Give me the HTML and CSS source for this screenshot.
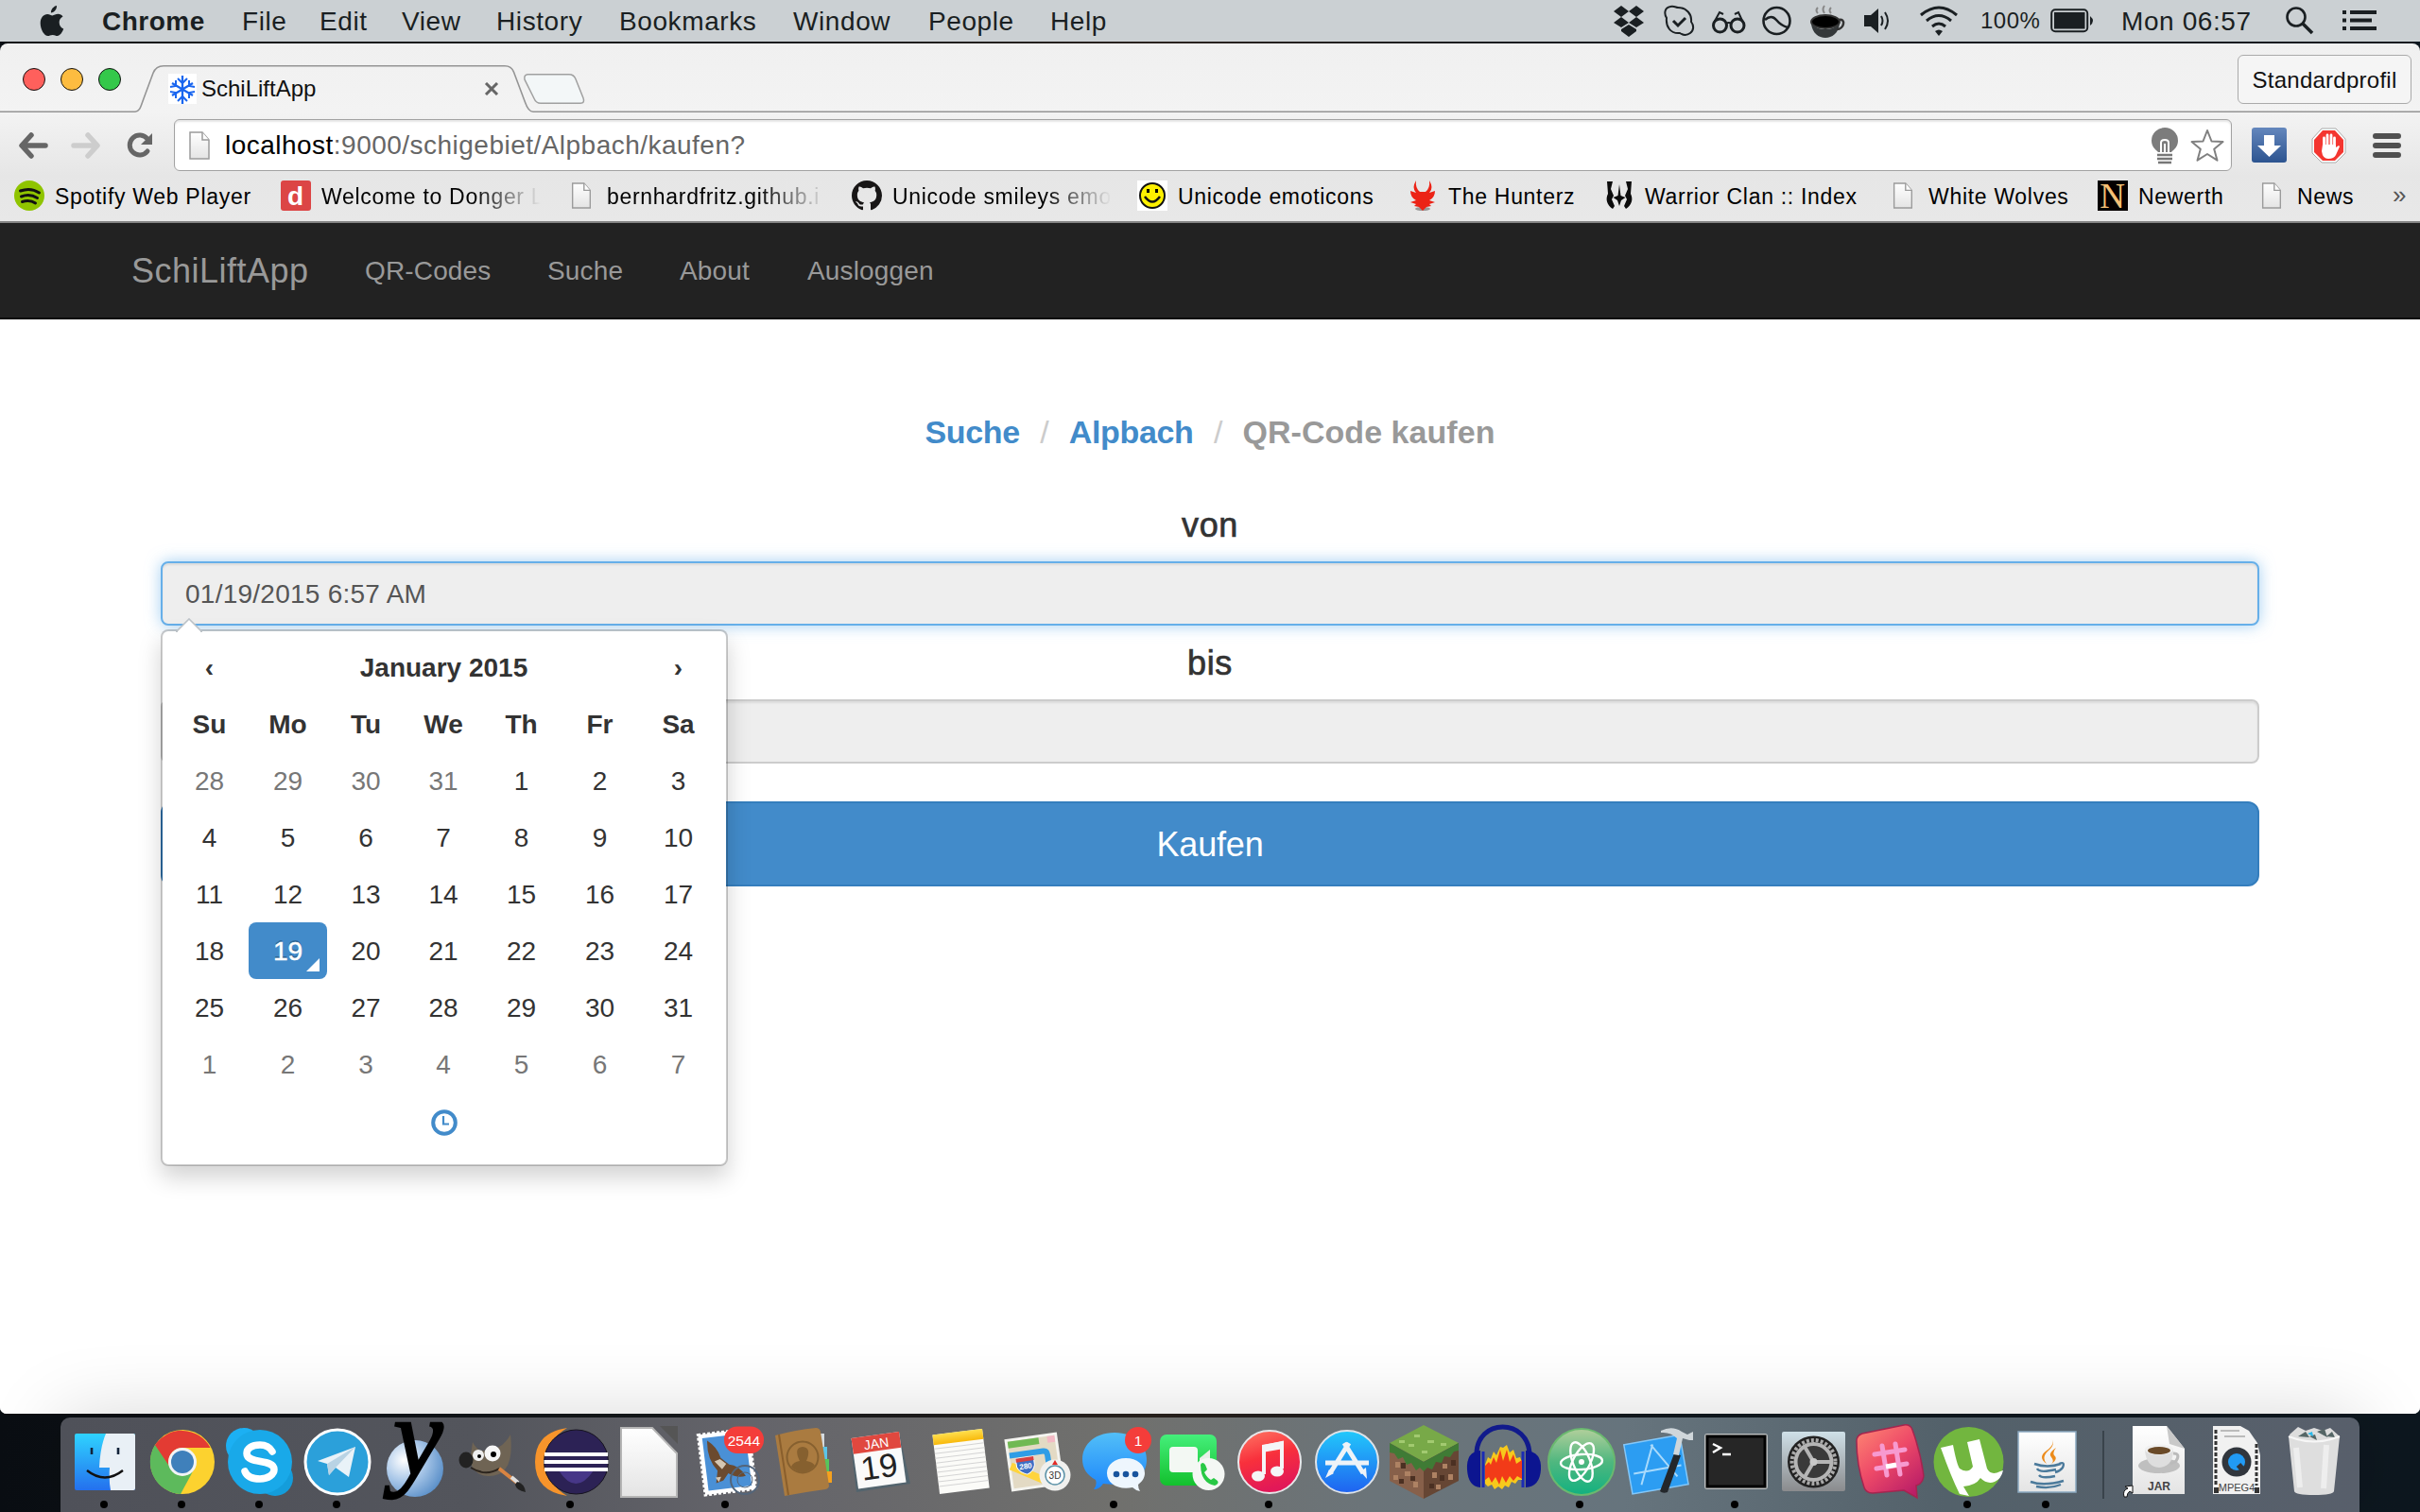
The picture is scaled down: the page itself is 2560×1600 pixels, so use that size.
FILE: index.html
```html
<!DOCTYPE html>
<html lang="de">
<head>
<meta charset="utf-8">
<title>SchiLiftApp</title>
<link rel="stylesheet" href="styles.css">
</head>
<body>
<svg class="defs" width="0" height="0" aria-hidden="true">
  <defs>
    <linearGradient id="paper" x1="0" y1="0" x2="0" y2="1"><stop offset="0" stop-color="#fff"/><stop offset="1" stop-color="#e4e4e4"/></linearGradient>
    <linearGradient id="finderBlue" x1="0" y1="0" x2="0" y2="1"><stop offset="0" stop-color="#2fd3ff"/><stop offset="1" stop-color="#2470ee"/></linearGradient>
    <linearGradient id="skyBlue" x1="0" y1="0" x2="0" y2="1"><stop offset="0" stop-color="#52bff8"/><stop offset="1" stop-color="#1d86fb"/></linearGradient>
    <linearGradient id="storeBlue" x1="0" y1="0" x2="0" y2="1"><stop offset="0" stop-color="#22c9fb"/><stop offset="1" stop-color="#1f62f0"/></linearGradient>
    <linearGradient id="itunes" x1="0" y1="0" x2=".3" y2="1"><stop offset="0" stop-color="#ff7a66"/><stop offset=".5" stop-color="#f8303c"/><stop offset="1" stop-color="#e21858"/></linearGradient>
    <linearGradient id="green" x1="0" y1="0" x2="0" y2="1"><stop offset="0" stop-color="#45ef7b"/><stop offset="1" stop-color="#13c02d"/></linearGradient>
    <linearGradient id="atom" x1="0" y1="0" x2="0" y2="1"><stop offset="0" stop-color="#b2cf9b"/><stop offset=".5" stop-color="#4fb77f"/><stop offset="1" stop-color="#12b180"/></linearGradient>
    <linearGradient id="pink" x1="0" y1="0" x2=".8" y2="1"><stop offset="0" stop-color="#ff8a73"/><stop offset=".5" stop-color="#ee4a68"/><stop offset="1" stop-color="#b91d67"/></linearGradient>
    <linearGradient id="steel" x1="0" y1="0" x2="0" y2="1"><stop offset="0" stop-color="#cfe0e8"/><stop offset="1" stop-color="#8a8b8d"/></linearGradient>
    <linearGradient id="yellow" x1="0" y1="0" x2="0" y2="1"><stop offset="0" stop-color="#ffdf4e"/><stop offset="1" stop-color="#f8b90b"/></linearGradient>
    <linearGradient id="dl" x1="0" y1="0" x2="0" y2="1"><stop offset="0" stop-color="#6487bd"/><stop offset="1" stop-color="#2c5490"/></linearGradient>
    <radialGradient id="ball" cx=".3" cy=".35" r=".75"><stop offset="0" stop-color="#fff"/><stop offset=".5" stop-color="#a9c7e8"/><stop offset="1" stop-color="#5b90c9"/></radialGradient>
    <symbol id="doc" viewBox="0 0 22 30"><path d="M1 1h13l7 8v20H1z" fill="url(#paper)" stroke="#9b9b9b" stroke-width="1.5"/><path d="M14 1v8h7" fill="#fff" stroke="#9b9b9b" stroke-width="1.5"/></symbol>
  </defs>
</svg>

<header class="menubar">
  <svg width="26" height="34" viewBox="0 0 26 34"><path d="M18 1c.3 3.600-2.600 7.500-6 7.500C11.500 5 15 1.400 18 1zM24.500 12.500c-2.500 1.600-4 3.600-3.800 6.500.1 3.200 1.900 5.400 4.500 6.600C23.900 29.400 21.300 33 18.700 33c-1.900 0-2.600-1.100-5-1.100-2.500 0-3.400 1.100-5 1.100C5 33 .7 26.500.7 19.500.7 13.800 4.200 10 8.200 10c2.200 0 3.900 1.400 5.300 1.400S17.200 9.800 19.500 9.800c2 0 3.800.9 5 2.700z" fill="#1a1f22"/></svg>
  <b>Chrome</b><span>File</span><span>Edit</span><span>View</span><span>History</span><span>Bookmarks</span><span>Window</span><span>People</span><span>Help</span>
  <svg width="34" height="34" viewBox="0 0 34 34" fill="#1a1f22"><path d="M9 1l8 6-8 6-8-6zM25 1l8 6-8 6-8-6zM9 13l8 6-8 5-8-5zM25 13l8 6-8 5-8-5zM17 21l8 5v2l-8 6-8-6v-2z"/></svg>
  <svg width="34" height="34" viewBox="0 0 34 34" fill="none" stroke="#1a1f22" stroke-width="2"><path d="M4 14C1 9 2 3 8 2c4-1 6 1 8 1 9 0 15 7 14 15 3 4 3 9-1 12-4 3-8 2-11 0C8 31 3 23 4 14z"/><path d="M11 17l5 5 8-8" stroke-width="3"/></svg>
  <svg width="38" height="34" viewBox="0 0 38 34" fill="none" stroke="#1a1f22" stroke-width="3"><circle cx="9.500" cy="22" r="7"/><circle cx="28" cy="22" r="7"/><path d="M16 20q3-2 5 0M3 19L9 8l4 2M34 19L29 8l-4 2" stroke-width="2"/></svg>
  <svg width="32" height="34" viewBox="0 0 32 34" fill="none" stroke="#1a1f22" stroke-width="2.600"><circle cx="15.500" cy="17" r="14"/><path d="M3 16q7-6 12 0t12 8"/></svg>
  <svg width="38" height="38" viewBox="0 0 38 38"><ellipse cx="17" cy="20" rx="15" ry="7" fill="#000" stroke="#333" stroke-width="2"/><path d="M2 22c2 20 28 20 30 0-7 8-23 8-30 0z" fill="#34383a"/><path d="M31 18c8-2 6 10-2 10" stroke="#333" stroke-width="2.500" fill="none"/><path d="M9 11q-3-3 0-6M16 11q-3-4 0-8M23 11q-3-3 0-6" stroke="#888" stroke-width="2" fill="none"/></svg>
  <svg width="28" height="34" viewBox="0 0 28 34"><path d="M0 11h7l8-7v26l-8-7H0z" fill="#1a1f22"/><path d="M18 12q3 5 0 10M22 8q6 9 0 18" fill="none" stroke="#1a1f22" stroke-width="2"/></svg>
  <svg width="42" height="34" viewBox="0 0 42 34" fill="none" stroke="#1a1f22" stroke-width="3"><path d="M2 11q19-16 38 0M8 17q13-11 26 0M14 23q7-6 14 0"/><path d="M17 28q4-3 8 0l-4 5z" fill="#1a1f22" stroke="none"/></svg>
  <span class="percent">100%</span>
  <svg width="46" height="26" viewBox="0 0 46 26"><rect x="1.200" y="1.200" width="38" height="23" rx="4" fill="none" stroke="#1a1f22" stroke-width="2"/><rect x="4" y="4" width="32.500" height="17.500" fill="#1a1f22"/><path d="M42 8q6 5 0 10z" fill="#1a1f22"/></svg>
  <span>Mon 06:57</span>
  <svg width="30" height="30" viewBox="0 0 30 30" fill="none" stroke="#1a1f22" stroke-width="2.600"><circle cx="11" cy="11" r="9.500"/><path d="M18 18l10 10" stroke-width="3.500"/></svg>
  <svg width="38" height="22" viewBox="0 0 38 22" fill="#1a1f22"><path d="M0 0h4v4H0zM8 0h28v4H8zM0 8.500h4v4H0zM8 8.500h23v4H8zM0 17h4v4H0zM8 17h28v4H8z"/></svg>
</header>

<main class="window">
  <div class="tabstrip">
    <svg class="tabshape" width="2560" height="73" viewBox="0 46 2560 73"><path d="M0 118.200H143c5 0 6-6 9-14l10-27q3-7.500 11-7.500H534q7 0 9.500 6.500l12 32q3.500 10 8.500 10H2560" fill="none" stroke="#949494" stroke-width="1.600"/><path d="M558 78.700H602q5 0 7 5l8 20q2 5.500-3 5.500H572q-5 0-7-5l-10-20q-1-5 3-5.500z" fill="#f3f7f8" stroke="#a0a0a0" stroke-width="1.500"/></svg>
    <div class="lights"><i class="red"></i><i class="amber"></i><i class="lime"></i></div>
    <div class="tab">
      <svg width="30" height="32" viewBox="0 0 30 32"><rect width="30" height="32" fill="#fff"/><path d="M15 2v30M4 10l22 13M26 10L4 23" fill="none" stroke="#1a66ef" stroke-width="2.300"/><path d="M10 5l5 5 5-5M10 29l5-5 5 5M2 14l6-1V7M28 14l-6-1V7M2 19l6 1v6M28 19l-6 1v6" fill="none" stroke="#1a66ef" stroke-width="2"/></svg>
      <span>SchiLiftApp</span>
      <svg class="close" width="16" height="14" viewBox="0 0 16 14"><path d="M2 1l12 12M14 1L2 13" stroke="#666" stroke-width="3"/></svg>
    </div>
    <div class="profile">Standardprofil</div>
  </div>

  <div class="toolbar">
    <svg width="32" height="28" viewBox="0 0 32 28"><path d="M14 3L4 14l10 11M5 14h24" fill="none" stroke="#666" stroke-width="5.500" stroke-linecap="round" stroke-linejoin="round"/></svg>
    <svg width="32" height="28" viewBox="0 0 32 28"><path d="M18 3l10 11-10 11M27 14H3" fill="none" stroke="#cdcdcd" stroke-width="5.500" stroke-linecap="round" stroke-linejoin="round"/></svg>
    <svg width="30" height="30" viewBox="0 0 30 30"><path d="M22 21a10.500 10.500 0 1 1 0-13" fill="none" stroke="#666" stroke-width="5" stroke-linecap="round"/><path d="M27 2v12H15z" fill="#666"/></svg>
    <div class="omnibox">
      <svg width="22" height="30"><use href="#doc"/></svg>
      <span class="url">localhost<em>:9000/schigebiet/Alpbach/kaufen?</em></span>
      <svg width="30" height="40" viewBox="0 0 30 40"><path d="M15 1a14 14 0 0 0-14 14c0 6 4 9 7 12h14c3-3 7-6 7-12A14 14 0 0 0 15 1z" fill="#7c7c7c"/><path d="M11 27V17q0-3 4-3t4 3v10M15 18v9" fill="none" stroke="#fff" stroke-width="2"/><path d="M7 30h16M7 34h16M8 38h14" stroke="#777" stroke-width="2.600"/></svg>
      <svg width="36" height="36" viewBox="0 0 36 36"><path d="M18 2l4.500 11.500 12 .6-9.300 7.600 3.300 12L18 27 7.500 33.700l3.300-12L1.500 14.100l12-.6z" fill="#fff" stroke="#808080" stroke-width="2" stroke-linejoin="round"/></svg>
    </div>
    <svg width="37" height="38" viewBox="0 0 37 38"><rect width="37" height="37" rx="3" fill="url(#dl)"/><path d="M13 8h11v11h7L18.500 31 6 19h7z" fill="#fff"/></svg>
    <svg width="37" height="38" viewBox="0 0 37 38"><path d="M11 1h15l10 11v15L26 37H11L1 27V12z" fill="#fff" stroke="#aaa"/><path d="M12 3h13l9 10v13l-9 9H12l-9-9V13z" fill="#f43630"/><path d="M13.500 20V11M17 19V8M21 19V8M24.500 20v-9" stroke="#fff" stroke-width="2.800" stroke-linecap="round"/><path d="M12 18h14v3l3-2 1 1-4 9q-2 4-8 4t-7-8z" fill="#fff"/></svg>
    <svg width="32" height="28" viewBox="0 0 32 28"><path d="M3 4h24M3 14h24M3 24h24" stroke="#505050" stroke-width="6" stroke-linecap="round"/></svg>
  </div>

  <nav class="bookmarks">
    <a><svg width="32" height="32" viewBox="0 0 32 32"><circle cx="16" cy="16" r="16" fill="#8fc400"/><path d="M6.500 11q11-4 20 2M7.500 17q9-3.500 17 1.500M8.500 22.500q8-2.500 14 1.500" fill="none" stroke="#111" stroke-width="3" stroke-linecap="round"/></svg><span>Spotify Web Player</span></a>
    <a><svg width="32" height="32" viewBox="0 0 32 32"><rect width="32" height="32" rx="3" fill="#dc4545"/><text x="16" y="26" text-anchor="middle" class="donger">d</text></svg><span class="fade">Welcome to Donger L</span></a>
    <a><svg width="32" height="28"><use href="#doc" x="5" width="22" height="28"/></svg><span class="fade">bernhardfritz.github.i</span></a>
    <a><svg width="32" height="32" viewBox="0 0 16 16"><path fill="#181616" d="M8 0C3.580 0 0 3.580 0 8c0 3.540 2.290 6.530 5.470 7.590.4.070.55-.17.55-.38 0-.19-.01-.82-.01-1.490-2.010.37-2.530-.49-2.690-.94-.09-.23-.48-.94-.82-1.130-.28-.15-.68-.52-.01-.53.63-.01 1.080.58 1.230.82.72 1.210 1.870.87 2.330.66.070-.52.28-.87.510-1.070-1.780-.2-3.640-.89-3.640-3.950 0-.87.31-1.590.82-2.150-.08-.2-.36-1.020.08-2.120 0 0 .67-.21 2.200.82a7.600 7.600 0 0 1 4 0c1.530-1.040 2.200-.82 2.200-.82.44 1.100.16 1.920.08 2.120.51.56.82 1.270.82 2.150 0 3.070-1.870 3.750-3.650 3.950.29.25.54.73.54 1.480 0 1.070-.01 1.930-.01 2.200 0 .21.15.46.55.38A8 8 0 0 0 16 8c0-4.420-3.580-8-8-8z"/></svg><span class="fade">Unicode smileys emo</span></a>
    <a><svg width="32" height="32" viewBox="0 0 32 32"><rect width="32" height="32" fill="#fff"/><circle cx="16" cy="16" r="13" fill="#fdf000" stroke="#111" stroke-width="2"/><path d="M10 9h3v4h-3zM19 9h3v4h-3z"/><path d="M8 17q8 11 16 0" fill="none" stroke="#111" stroke-width="2.500"/></svg><span>Unicode emoticons</span></a>
    <a><svg width="32" height="32" viewBox="0 0 32 32"><ellipse cx="16" cy="30" rx="8" ry="2" fill="#999"/><path d="M9 0Q4 8 9 13L3 11q0 7 6 10l-6 2 6 2-2 2 5 1 4 4 4-4 5-1-2-2 6-2-6-2q6-3 6-10l-6 2q5-5 0-13 1 8-4 12h-6Q8 8 9 0z" fill="#ec2316"/></svg><span>The Hunterz</span></a>
    <a><svg width="32" height="32" viewBox="0 0 32 32"><path d="M3 1h6l-2 8 3 7-2 4 3 7-2 3C3 26 1 20 4 14zM29 1h-6l2 8-3 7 2 4-3 7 2 3c6-4 8-10 5-16z" fill="#0c0c0c"/><path d="M16 4l1.500 12 5 2-4.500 3-2 6-2-6-4.500-3 5-2z" fill="#0c0c0c"/></svg><span>Warrior Clan :: Index</span></a>
    <a><svg width="32" height="28"><use href="#doc" x="5" width="22" height="28"/></svg><span>White Wolves</span></a>
    <a><svg width="32" height="32" viewBox="0 0 32 32"><rect width="32" height="32" fill="#050000"/><text x="16" y="29" text-anchor="middle" class="newerth">N</text></svg><span>Newerth</span></a>
    <a><svg width="32" height="28"><use href="#doc" x="5" width="22" height="28"/></svg><span>News</span></a>
    <span class="more">»</span>
  </nav>

  <nav class="navbar">
    <span class="brand">SchiLiftApp</span><span>QR-Codes</span><span>Suche</span><span>About</span><span>Ausloggen</span>
  </nav>

  <section class="page">
    <div class="breadcrumb"><b>Suche</b><i>/</i><b>Alpbach</b><i>/</i><b class="current">QR-Code kaufen</b></div>
    <div class="label von">von</div>
    <div class="field focus">01/19/2015 6:57 AM
      <div class="picker">
        <svg class="notch" width="28" height="15" viewBox="0 0 28 15"><path d="M0 15L14 1l14 14z" fill="#fff" stroke="#bdc3c8" stroke-width="1.600"/><path d="M2 14h24v2H2z" fill="#fff"/></svg>
        <div class="days">
          <b>‹</b><b class="month">January 2015</b><b>›</b>
          <b>Su</b><b>Mo</b><b>Tu</b><b>We</b><b>Th</b><b>Fr</b><b>Sa</b>
          <span class="old">28</span><span class="old">29</span><span class="old">30</span><span class="old">31</span><span>1</span><span>2</span><span>3</span>
          <span>4</span><span>5</span><span>6</span><span>7</span><span>8</span><span>9</span><span>10</span>
          <span>11</span><span>12</span><span>13</span><span>14</span><span>15</span><span>16</span><span>17</span>
          <span>18</span><span class="active">19</span><span>20</span><span>21</span><span>22</span><span>23</span><span>24</span>
          <span>25</span><span>26</span><span>27</span><span>28</span><span>29</span><span>30</span><span>31</span>
          <span class="old">1</span><span class="old">2</span><span class="old">3</span><span class="old">4</span><span class="old">5</span><span class="old">6</span><span class="old">7</span>
        </div>
        <div class="clock"><svg width="28" height="28" viewBox="0 0 28 28" fill="none" stroke="#428bca"><circle cx="14" cy="14" r="11.800" stroke-width="4"/><path d="M13 7v8.500h6" stroke-width="2.200"/></svg></div>
      </div>
    </div>
    <div class="label bis">bis</div>
    <div class="field"></div>
    <div class="buy">Kaufen</div>
  </section>
</main>

<footer class="dock">
  <div class="app run"><svg viewBox="0 0 82 100"><rect x="9" y="17" width="64" height="60" rx="2" fill="url(#finderBlue)"/><path d="M42 17h29q2 0 2 2v56q0 2-2 2H47q-2-11-1-24H35q1-22 7-36z" fill="#e9f0f6"/><path d="M27 32v7M55 32v7" stroke="#12233a" stroke-width="2.600"/><path d="M22 56q19 15 38 0" fill="none" stroke="#111" stroke-width="2.400"/></svg></div>
  <div class="app run"><svg viewBox="0 0 82 100"><circle cx="41" cy="47" r="34" fill="#fcd22f"/><path d="M11.500 30A34 34 0 0 1 70.500 32H41a15 15 0 0 0-14 20z" fill="#e33b33"/><path d="M12 29A34 34 0 0 0 39 81l13-24a15 15 0 0 1-24-4z" fill="#5dba5c"/><circle cx="41" cy="47" r="15" fill="#f1f4f6"/><circle cx="41" cy="47" r="12" fill="#3f80bb"/></svg></div>
  <div class="app run"><svg viewBox="0 0 82 100"><circle cx="24" cy="30" r="19" fill="#1cb0f3"/><circle cx="57" cy="64" r="19" fill="#149ddb"/><circle cx="41" cy="47" r="34" fill="#19a9e9"/><path d="M54 36Q50 29 41 29c-9 0-14 4-14 9 0 12 29 5 29 17 0 5-6 10-15 10-8 0-14-3-16-8" fill="none" stroke="#fff" stroke-width="7.500" stroke-linecap="round"/></svg></div>
  <div class="app run"><svg viewBox="0 0 82 100"><circle cx="41" cy="47" r="34" fill="#2ba0da" stroke="#fff" stroke-width="3"/><path d="M20 46l40-15-7 32-14-10-7 8-2-12z" fill="#e9f2f8"/><path d="M30 49l30-18-21 22-7 8z" fill="#b9d3e4"/></svg></div>
  <div class="app"><svg viewBox="0 0 82 100"><circle cx="40" cy="54" r="30" fill="url(#ball)"/><text x="17" y="61" class="ygl">y</text></svg></div>
  <div class="app"><svg viewBox="0 0 82 100"><path d="M19 26q3 6 8 9 22 2 32-17 5 45-24 44Q20 61 16 46z" fill="#6f6454"/><ellipse cx="12" cy="45" rx="7.500" ry="8.500" fill="#222"/><circle cx="25" cy="40" r="6" fill="#eee"/><circle cx="40" cy="38" r="8.500" fill="#f6f6f6"/><circle cx="26" cy="41" r="2" /><circle cx="41" cy="39" r="3"/><path d="M17 53q16 10 30 1" fill="none" stroke="#2b241d" stroke-width="2"/><path d="M47 54l19 15" stroke="#d98442" stroke-width="4"/><path d="M60 63l7 6" stroke="#ddd" stroke-width="4"/><path d="M66 68q8 2 9 11-10-2-11-8z" fill="#222"/></svg></div>
  <div class="app run"><svg viewBox="0 0 82 100"><path d="M37 11Q3 16 3 47t34 36Q15 70 15 47t22-36z" fill="#f7942b"/><circle cx="46.500" cy="47" r="34" fill="#2c2255" stroke="#16131f"/><path d="M28 56q18 28 37 0z" fill="#473788"/><path d="M13 39h67M12.500 47h68M13 55h67" stroke="#fff" stroke-width="4"/></svg></div>
  <div class="app"><svg viewBox="0 0 82 100"><path d="M12 11h33l26 27v46H12z" fill="url(#paper)" stroke="#b5b5b5" stroke-width="2"/><path d="M53 9h19v19z" fill="#555"/></svg></div>
  <div class="app run"><svg viewBox="0 0 82 100"><g transform="rotate(-7 42 47)"><rect x="15" y="15" width="54" height="64" fill="#fff" stroke="#fff" stroke-width="3" stroke-dasharray="3 2"/><rect x="19" y="19" width="46" height="56" fill="#4a90d6"/><path d="M24 22q10 8 12 20l8 8q10 2 16 14-9 2-18-5l-6 7-8 2 3-13q-10-14-7-33z" fill="#6b4a2f"/><path d="M29 45l6-2 6 6-5 5zM28 62l6 0-3 5z" fill="#d5c6b2"/></g><circle cx="61" cy="66" r="15" fill="none" stroke="#53657a" stroke-width="2"/><circle cx="61" cy="66" r="8" fill="none" stroke="#53657a"/><rect x="39" y="9.500" width="42" height="28.500" rx="14" fill="#f43d3a"/><text x="60" y="29.500" text-anchor="middle" class="badge">2544</text></svg></div>
  <div class="app"><svg viewBox="0 0 82 100"><path d="M58 17h5v15h-5z" fill="#d5dbe0"/><path d="M60 31h6v13h-6z" fill="#5bc5e8"/><path d="M62 44h6v13h-6z" fill="#57c65c"/><path d="M63 57h8v12h-8z" fill="#f5a11e"/><path d="M11 19q22-6 43-8 4 0 5 4l9 57q0 3-4 4-22 3-43 7z" fill="#aa7b40"/><path d="M15 18l10 64" stroke="#8a5f2c" stroke-width="2"/><circle cx="40" cy="42" r="16.500" fill="none" stroke="#86602f" stroke-width="2"/><path d="M28 52q2-5 9-6-7-14 3-15 10 1 4 15 7 1 9 5-12 14-25 1z" fill="#86602f"/></svg></div>
  <div class="app"><svg viewBox="0 0 82 100"><path d="M8 23l52-8 12 55-57 9z" fill="#53646e"/><g transform="rotate(-8 40 45)"><rect x="13" y="18" width="51" height="54" fill="#fafafa"/><path d="M13 18h51v17H13z" fill="#e0483f"/><text x="38.500" y="32" text-anchor="middle" class="cal-m">JAN</text><text x="38" y="64" text-anchor="middle" class="cal-d">19</text></g></svg></div>
  <div class="app"><svg viewBox="0 0 82 100"><g transform="rotate(-7 42 46)"><rect x="16" y="15" width="53" height="63" fill="#fbfbf8"/><path d="M16 30h53M16 35h53M16 40h53M16 45h53M16 50h53M16 55h53M16 60h53M16 65h53M16 70h53" stroke="#d4d4d4"/><rect x="16" y="15" width="53" height="11" fill="url(#yellow)"/></g></svg></div>
  <div class="app"><svg viewBox="0 0 82 100"><g transform="rotate(-8 38 47)"><rect x="10" y="19" width="56" height="56" fill="#f4f4f0"/><rect x="13" y="22" width="50" height="50" fill="#e3dac4"/><path d="M13 22h33v7H13z" fill="#70b953"/><path d="M55 22h8v7h-8z" fill="#f3b9c4"/><path d="M13 37h36q4 0 4 5v30" fill="none" stroke="#2f9de6" stroke-width="6"/><path d="M13 48l40 24" stroke="#ffd43c" stroke-width="8"/><path d="M19 41h19v9q-2 7-9 9-8-3-10-9z" fill="#3e6fc6" stroke="#fff"/><path d="M19 41h19v4H19z" fill="#d64141"/><text x="28.500" y="53" text-anchor="middle" class="route">280</text></g><circle cx="60" cy="61" r="16.500" fill="#f0f0ee"/><circle cx="60" cy="61" r="10" fill="#fff" stroke="#5d93a8" stroke-width="1.500"/><text x="60" y="65" text-anchor="middle" class="three">3D</text><path d="M60 45l3 5h-6z" fill="#e32a26"/></svg></div>
  <div class="app run"><svg viewBox="0 0 82 100"><path d="M41 16c20 0 34 12 34 29S59 71 41 71l-12-1q-4 6-10 6 4-5 2-10C12 61 7 54 7 44 7 28 21 16 41 16z" fill="url(#skyBlue)"/><path d="M53 43c12 0 20 7 20 16 0 5-3 9-7 12q0 4 2 7-5-1-8-4c-15 3-27-4-27-15 0-9 8-16 20-16z" fill="#eef6fd"/><circle cx="43" cy="60" r="3.300" fill="#18549d"/><circle cx="53" cy="60" r="3.300" fill="#18549d"/><circle cx="63" cy="60" r="3.300" fill="#18549d"/><circle cx="66" cy="24" r="14" fill="#f43d3a"/><text x="66" y="29.500" text-anchor="middle" class="badge">1</text></svg></div>
  <div class="app"><svg viewBox="0 0 82 100"><rect x="7" y="18" width="60" height="54" rx="7" fill="url(#green)"/><rect x="17" y="31" width="30" height="27" rx="4" fill="#f3f8f3"/><path d="M49 43l11-9v22l-11-8z" fill="#e7efe7"/><circle cx="58.500" cy="60" r="17" fill="#f4f7f4"/><path d="M50 50q2-4 5 0l2 5-3 3q3 6 7 8l3-2 4 3q2 3-3 5-15-3-15-22z" fill="#28c945"/></svg></div>
  <div class="app run"><svg viewBox="0 0 82 100"><circle cx="41" cy="47" r="33" fill="url(#itunes)" stroke="#e7e7ea" stroke-width="2"/><path d="M35 60V31l19-4v27" fill="none" stroke="#f5f5f7" stroke-width="4"/><path d="M33 29l23-4v8l-23 4z" fill="#f5f5f7"/><ellipse cx="29" cy="62" rx="7" ry="5.500" fill="#f5f5f7"/><ellipse cx="49" cy="57" rx="7" ry="5.500" fill="#f5f5f7"/></svg></div>
  <div class="app"><svg viewBox="0 0 82 100"><circle cx="41" cy="47" r="33" fill="url(#storeBlue)" stroke="#dfe3e8" stroke-width="2"/><path d="M43 27L23 59M38 27l20 32M18 48h46" stroke="#eef3f8" stroke-width="5"/><path d="M22 55l-4 9 9-5zM55 57l7 8-1-12z" fill="#eef3f8"/></svg></div>
  <div class="app"><svg viewBox="0 0 82 100"><path d="M40 8l37 19-37 20L4 27z" fill="#78a948"/><path d="M4 27l36 20v39L4 67z" fill="#87604a"/><path d="M77 27L40 47v39l37-19z" fill="#664634"/><path d="M4 27l36 20v10l-4-4-4 3-5-8-5 2-4-8-5 2-4-6-5-1zM77 27L40 47v10l4-4 5 2 4-8 6 1 3-7 6 1 4-6 5-1z" fill="#3f7b35"/><path d="M10 47h5v6h-5zM20 57h6v5h-6zM8 61h5v5H8zM29 68h5v6h-5zM49 58h5v6h-5zM60 49h5v5h-5zM66 60h5v6h-5zM53 71h5v5h-5z" fill="#ae8263"/><path d="M16 48h5v6h-5zM26 62h5v5h-5zM14 65h5v5h-5zM57 61h5v6h-5zM46 70h5v5h-5zM69 45h5v6h-5z" fill="#4b3022"/><path d="M30 18h6v3h-6zM44 24h7v3h-7zM24 28h6v3h-6zM38 35h6v3h-6zM58 27h6v3h-6zM14 24h6v3h-6z" fill="#a2ca70"/></svg></div>
  <div class="app"><svg viewBox="0 0 82 100"><path d="M13 40C12 0 69 0 69 40" fill="none" stroke="#111a8c" stroke-width="5"/><path d="M17 35Q2 36 3 55q1 18 14 19zM65 35q17 1 16 20-1 18-16 19z" fill="#0c1590"/><path d="M20 36v38M62 36v38" stroke="#1b2bb5" stroke-width="3"/><path d="M22 50l3-8 3 2 3-8 3 4 4-9 3 1 4-3 3 8 4-3 3 9 4-1 2 5v19l-4 0-3 4-4-2-3 6-4-2-3 4-4-3-4 3-3-5-4 2-3-3z" fill="#f7c91c"/><path d="M22 51l4-4 2 3 3-8 3 6 4-14 3 12 4-12 3 13 4-8 3 10 6-4v20l-5-3-4 5-4-5-4 7-4-7-3 9-4-8-4 6-3-6-4 3z" fill="#f23b18"/></svg></div>
  <div class="app run"><svg viewBox="0 0 82 100"><circle cx="42" cy="47" r="35" fill="url(#atom)" stroke="#6ab96f" stroke-width="2"/><g fill="none" stroke="#fff" stroke-width="2.400"><ellipse cx="42" cy="47" rx="9" ry="22" transform="rotate(-22 42 47)"/><ellipse cx="42" cy="47" rx="9" ry="22" transform="rotate(28 42 47)"/><ellipse cx="42" cy="47" rx="22" ry="8" transform="rotate(-4 42 47)"/></g><circle cx="42" cy="47" r="3" fill="#fff"/></svg></div>
  <div class="app"><svg viewBox="0 0 82 100"><g transform="rotate(-10 40 50)"><rect x="9" y="23" width="60" height="53" fill="#2c9df2" stroke="#84c7f8" stroke-width="1.500"/><path d="M39 28L20 68M37 28l22 38M14 55h51" stroke="#a8dafc" stroke-width="2" fill="none"/></g><path d="M58 38l7 2-14 39q-5 2-8-1z" fill="#23272b"/><path d="M44 14q12-6 22 1l6 3 6-3v9l-4 0-7-2-4 18-6-1 4-17q-7-7-17-6z" fill="#cfd6da"/></svg></div>
  <div class="app run"><svg viewBox="0 0 82 100"><rect x="9" y="18" width="65" height="57" rx="2" fill="#262626" stroke="#b9bcbd" stroke-width="2"/><rect x="11" y="20" width="61" height="53" fill="none" stroke="#000" stroke-width="3"/><path d="M17 28l8 4-8 5M27 39h9" fill="none" stroke="#fff" stroke-width="2.500"/></svg></div>
  <div class="app"><svg viewBox="0 0 82 100"><rect x="8" y="15" width="67" height="63" rx="2" fill="url(#steel)"/><circle cx="41.500" cy="47" r="27.500" fill="#222"/><circle cx="41.500" cy="47" r="23" fill="none" stroke="#a9a9a9" stroke-width="4" stroke-dasharray="3 2"/><circle cx="41.500" cy="47" r="19" fill="#3a3a3a" stroke="#b5b5b5" stroke-width="4"/><path d="M41.500 47h19M41.500 47l-10-17M41.500 47l-10 17" stroke="#b5b5b5" stroke-width="4"/><circle cx="41.500" cy="47" r="4" fill="#c8c8c8"/></svg></div>
  <div class="app"><svg viewBox="0 0 82 100"><path d="M5 25q0-6 6-8l44-9q7-1 9 5 9 25 12 49-1 8-8 10l1 13-14-8-33 3q-7 0-9-6Q5 50 5 25z" fill="url(#pink)" stroke="#a5254f" stroke-width="1.500"/><path d="M32 30l5 31M46 28l5 32M24 39l32-5M26 54l32-5" stroke="#f79ad0" stroke-width="5" stroke-linecap="round"/><path d="M36 52l11-2" stroke="#fff" stroke-width="5"/></svg></div>
  <div class="app run"><svg viewBox="0 0 82 100"><circle cx="41.500" cy="47" r="37" fill="#72b63f"/><path d="M12 32l13-3q4 21 7 25 9 6 14-2l-6-26 13-3 8 31q4 8 14 3l3-1q-2 9-9 12-8 3-15-4-5 8-18 9l6 10-10-2q-9-18-20-49z" fill="#fff"/></svg></div>
  <div class="app run"><svg viewBox="0 0 82 100"><rect x="11" y="15" width="61" height="64" fill="url(#paper)" stroke="#8aa8c0" stroke-width="1.500"/><path d="M46 22q5 6-3 13t-2 14q-10-7 0-14t5-13zM51 32q-9 6-5 10 4 5-1 8 9-6 4-10-2-3 2-8z" fill="#ec8b1a"/><g fill="none" stroke="#4b7a9b" stroke-width="2.400"><path d="M28 49q14 5 28 0M54 49q7-3 4 4-3 4-8 5M31 54q2 5 20 1M33 61q3 4 17 1M24 68q14 5 35-1M30 73q14 3 26-2"/></g></svg></div>
  <div class="rule"></div>
  <div class="app jar"><svg viewBox="0 0 82 100"><path d="M13 9h36l19 24v48H13z" fill="url(#paper)"/><path d="M49 9l19 24-16-5z" fill="#c9c9c9"/><ellipse cx="41" cy="51" rx="22" ry="8" fill="#bfbfbf"/><path d="M26 34h30q0 18-15 19-14-1-15-19z" fill="#dedede"/><ellipse cx="41" cy="34" rx="15" ry="5.500" fill="#f0f0f0"/><ellipse cx="41" cy="35" rx="12" ry="4" fill="#6a4a28"/><path d="M56 38q8 0 3 8l-6 3" fill="none" stroke="#bbb" stroke-width="3"/><text x="41" y="77" text-anchor="middle" class="jar-t">JAR</text><path d="M4 84q-2-7 4-9l-3-2 8-1v8l-3-2q-3 2-3 6z" fill="#fff" stroke="#111"/></svg></div>
  <div class="app"><svg viewBox="0 0 82 100"><path d="M16 9h29l9 5 9 13 3 13v41H16z" fill="#f1f1f1"/><path d="M19 13v60M62 28v44" stroke="#333" stroke-width="3" stroke-dasharray="4 2"/><path d="M24 14h20M28 20h22" stroke="#bbb" stroke-width="2"/><circle cx="41" cy="47" r="15.500" fill="#31363d"/><circle cx="41" cy="47" r="9" fill="#219bf5"/><path d="M43 50l8 9" stroke="#31363d" stroke-width="6"/><path d="M17 74h5v6h-5zM60 74h5v6h-5z" fill="#333"/><text x="41" y="78" text-anchor="middle" class="mpeg-t">MPEG4</text></svg></div>
  <div class="app"><svg viewBox="0 0 82 100"><path d="M15 18l9-8 8 4 9-3 9 3 8-3 10 9-4 12H18z" fill="#ddd"/><path d="M24 20l8-5 4 6zM44 15l8-3 3 9zM54 20l6-5 3 6zM36 20l6-2 2 6z" fill="#566"/><path d="M34 17l5-2 1 5z" fill="#2ab8e8"/><path d="M14 20q27 11 54 0l-6 58q-1 4-21 4t-21-4z" fill="#dedede"/><path d="M22 32l4 42M54 29l-3 46" stroke="#eee" stroke-width="6"/><path d="M14 20q27 11 54 0" fill="none" stroke="#f7f7f7" stroke-width="2"/></svg></div>
</footer>
</body>
</html>
```
FILE: styles.css
```css
* { box-sizing: border-box; }
html, body { margin: 0; width: 2560px; height: 1600px; overflow: hidden; }
body {
  display: flex;
  flex-direction: column;
  background: linear-gradient(90deg, #0a0e13, #16191c 30%, #2a221e 48%, #10181f 70%, #0d171f);
  font-family: "Liberation Sans", Arial, sans-serif;
  font-size: 28px;
  color: #333;
}
svg { display: block; flex: none; }
.defs { position: absolute; }

.menubar {
  display: grid;
  grid-template-columns: 66px 148px 82px 87px 100px 130px 184px 143px 129px 595px 53px 51px 54px 50px 58px 58px 65px 74px 75px 174px 60px 1fr;
  align-items: center;
  height: 44px;
  flex: none;
  padding-left: 42px;
  background: #cbd0d3;
  color: #1a1f22;
  letter-spacing: .6px;
  white-space: nowrap;
}
.menubar b { letter-spacing: .5px; }
.menubar b, .menubar span { padding-top: 2px; }
.menubar .percent { font-size: 24px; letter-spacing: .5px; padding-top: 0; }

.window {
  display: flex;
  flex-direction: column;
  margin-top: 2px;
  height: 1450px;
  flex: none;
  border-radius: 8px 8px 7px 7px;
  overflow: hidden;
  background: linear-gradient(#f0f0f0, #f3f3f3 72px, #e6e6e6 140px, #e8e8e8 188px, #fff 190px);
}

.tabstrip { display: flex; height: 73px; position: relative; flex: none; color: #111; font-size: 24px; }
.tabshape { position: absolute; left: 0; top: 0; }
.lights { display: flex; gap: 16px; padding: 26px 0 0 24px; width: 178px; position: relative; }
.lights i { width: 24px; height: 24px; border-radius: 50%; border: 1px solid; }
.red { background: #ff605c; border-color: #e2463f; }
.amber { background: #fdbc40; border-color: #e0a033; }
.lime { background: #34c84a; border-color: #27aa35; }
.tab { position: relative; display: flex; align-items: center; width: 360px; height: 32px; margin-top: 32px; }
.tab span { margin-left: 5px; }
.close { margin-left: auto; margin-right: 10px; }
.profile {
  position: relative;
  margin: 12px 9px 0 auto;
  width: 184px;
  height: 52px;
  line-height: 51px;
  text-align: center;
  border: 1.5px solid #aaa;
  border-radius: 6px;
  background: #f5f5f5;
  letter-spacing: .25px;
}

.toolbar {
  display: grid;
  grid-template-columns: 56px 59px 50px 2198px 63px 65px 1fr;
  align-items: center;
  height: 69px;
  flex: none;
  padding-left: 19px;
}
.omnibox {
  display: flex;
  align-items: center;
  width: 2177px;
  height: 55px;
  padding: 0 7px 0 15px;
  border: 1.5px solid #a2a2a2;
  border-radius: 6px;
  background: #fff;
  box-shadow: inset 0 2px 2px #e6e6e6;
}
.url { flex: 1; margin-left: 16px; padding-top: 1px; color: #000; letter-spacing: .48px; }
.url em { font-style: normal; color: #666; }
.omnibox svg + svg { margin-left: 12px; }

.bookmarks {
  display: grid;
  grid-template-columns: 282px 302px 302px 302px 286px 208px 300px 222px 168px 144px 1fr;
  height: 48px;
  flex: none;
  padding: 3px 0 0 15px;
  border-bottom: 2px solid #858585;
  font-size: 23px;
  letter-spacing: .7px;
  color: #000;
  white-space: nowrap;
}
.bookmarks a { display: flex; align-items: center; gap: 11px; height: 32px; }
.bookmarks a span { padding-top: 3px; }
.fade { -webkit-mask-image: linear-gradient(90deg, #000 160px, transparent 232px); mask-image: linear-gradient(90deg, #000 160px, transparent 232px); }
.more { font-size: 26px; color: #555; line-height: 30px; }
.donger { font: bold 28px "Liberation Sans", sans-serif; fill: #fff; }
.newerth { font: 37px "Liberation Serif", serif; fill: #f5c176; }

.navbar {
  display: grid;
  grid-template-columns: 247px 193px 140px 135px 1fr;
  align-items: center;
  height: 102px;
  flex: none;
  padding-left: 139px;
  background: #222;
  border-bottom: 2px solid #080808;
  color: #999;
  letter-spacing: .15px;
}
.navbar span { padding-top: 1px; }
.brand { font-size: 36px; letter-spacing: .5px; }

.page { display: flex; flex-direction: column; flex: 1; padding: 0 170px; background: #fff; }
.breadcrumb { display: flex; justify-content: center; margin-top: 99px; height: 39px; line-height: 40px; font-size: 34px; letter-spacing: -.35px; white-space: nowrap; }
.breadcrumb b { color: #428bca; }
.breadcrumb .current { color: #999; letter-spacing: .05px; }
.breadcrumb i { width: 52px; text-align: center; font-style: normal; color: #ccc; }
.label { height: 40px; line-height: 40px; text-align: center; font-size: 36px; letter-spacing: .6px; -webkit-text-stroke: .7px #333; }
.von { margin: 60px 0 18px; }
.bis { margin: 20px 0 18px; }
.field {
  position: relative;
  height: 68px;
  flex: none;
  padding-left: 24px;
  line-height: 65px;
  border: 2px solid #ccc;
  border-radius: 8px;
  background: #eee;
  box-shadow: inset 0 2px 2px rgba(0, 0, 0, .075);
  color: #555;
  letter-spacing: .25px;
}
.focus { border-color: #66afe9; box-shadow: inset 0 2px 2px rgba(0, 0, 0, .075), 0 0 16px rgba(102, 175, 233, .6); z-index: 2; }
.buy {
  margin-top: 40px;
  height: 90px;
  line-height: 88px;
  text-align: center;
  border: 2px solid #357ebd;
  border-radius: 12px;
  background: #428bca;
  color: #fff;
  font-size: 36px;
  letter-spacing: -.2px;
}

/* The date picker drops down over the form */
.picker {
  position: absolute;
  left: -2px;
  top: 70px;
  width: 600px;
  height: 568px;
  padding: 8px;
  border: 2px solid rgba(0, 0, 0, .2);
  border-radius: 8px;
  background: #fff;
  background-clip: padding-box;
  box-shadow: 0 12px 24px rgba(0, 0, 0, .175);
  color: #333;
  letter-spacing: 0;
}
.notch { position: absolute; left: 14px; top: -14px; }
.days { display: grid; grid-template-columns: 83px 83px 82px 82px 83px 83px 83px; grid-auto-rows: 60px; line-height: 61px; text-align: center; }
.month { grid-column: span 5; }
.old { color: #777; }
.active { position: relative; border-radius: 8px; background: #428bca; color: #fff; text-shadow: 0 -2px 0 rgba(0, 0, 0, .25); -webkit-text-stroke: .5px #fff; }
.active::after { content: ""; position: absolute; right: 8px; bottom: 8px; border-left: 14px solid transparent; border-bottom: 14px solid #fff; }
.clock { display: flex; justify-content: center; padding-top: 18px; }

.dock {
  display: flex;
  width: 2432px;
  height: 100px;
  margin: 4px 0 0 64px;
  padding-left: 6px;
  border-radius: 10px 10px 0 0;
  background: linear-gradient(90deg, #4f5159, #53555c 18%, #64646a 30%, #70706d 46%, #6b7479 57%, #66747d 68%, #53616a 82%, #585f6b);
  box-shadow: 0 0 80px rgba(0, 0, 0, .17);
  flex: none;
}
.app { position: relative; width: 82.150px; height: 100px; flex: none; }
.app svg { width: 82px; height: 100px; }
.run::after { content: ""; position: absolute; left: 36px; top: 88px; width: 8px; height: 8px; border-radius: 50%; background: #000; }
.rule { width: 2px; height: 72px; margin: 14px 17px 0 18.500px; background: #39434b; flex: none; }
.badge { font: 15.500px "Liberation Sans", sans-serif; fill: #fff; }
.ygl { font: italic 118px "Liberation Serif", serif; fill: #000; stroke: #000; stroke-width: 2.500px; }
.cal-m { font: 14px "Liberation Sans", sans-serif; fill: #fff; }
.cal-d { font: 35px "Liberation Sans", sans-serif; fill: #222; }
.route { font: bold 8px "Liberation Sans", sans-serif; fill: #fff; }
.three { font: 10px "Liberation Sans", sans-serif; fill: #333; }
.jar-t { font: bold 12px "Liberation Sans", sans-serif; fill: #444; }
.mpeg-t { font: 11px "Liberation Sans", sans-serif; fill: #444; }
```
